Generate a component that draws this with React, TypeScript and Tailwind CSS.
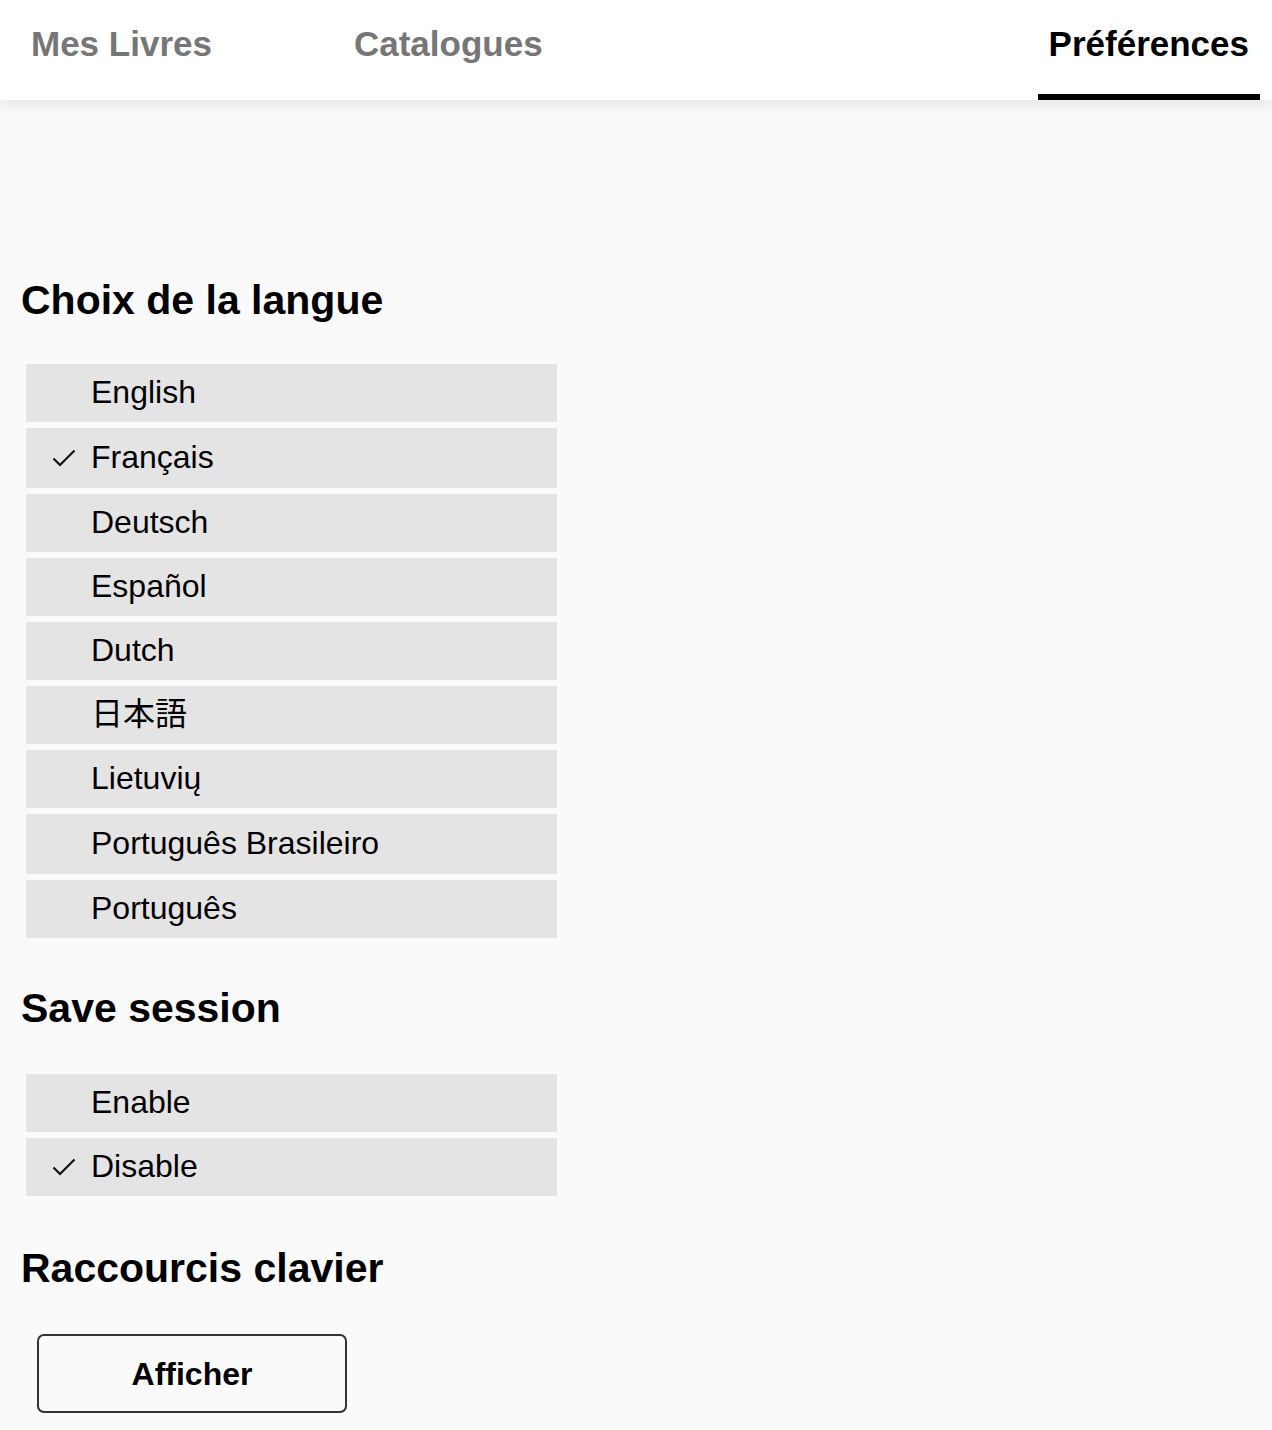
import React from 'react';

const sans = 'font-["Liberation_Sans","Noto_Sans_CJK_JP",Arial,sans-serif]';

const languages = [
  { label: 'English', checked: false, tall: false },
  { label: 'Français', checked: true, tall: true },
  { label: 'Deutsch', checked: false, tall: false },
  { label: 'Español', checked: false, tall: false },
  { label: 'Dutch', checked: false, tall: false },
  { label: '日本語', checked: false, tall: false },
  { label: 'Lietuvių', checked: false, tall: false },
  { label: 'Português Brasileiro', checked: false, tall: true },
  { label: 'Português', checked: false, tall: false },
];

const session = [
  { label: 'Enable', checked: false, tall: false },
  { label: 'Disable', checked: true, tall: false },
];

function Check() {
  return (
    <svg className="absolute left-[26px] top-1/2 -translate-y-1/2" width="24" height="18" viewBox="0 0 24 18" fill="none">
      <path d="M1.5 9.5 L8 16 L22.5 1.5" stroke="#111" strokeWidth="2.2" strokeLinecap="butt" strokeLinejoin="miter" />
    </svg>
  );
}

function OptionList({ items }: { items: { label: string; checked: boolean; tall: boolean }[] }) {
  return (
    <ul className="ml-[5px] flex w-[531px] flex-col gap-[6px]">
      {items.map((item) => (
        <li
          key={item.label}
          className={`relative flex items-center bg-[#e4e4e4] pb-[3px] pl-[65px] text-[32px] text-black ${item.tall ? 'h-[60px]' : 'h-[58px]'}`}
        >
          {item.checked && <Check />}
          {item.label}
        </li>
      ))}
    </ul>
  );
}

function Heading({ children, className = '' }: { children: React.ReactNode; className?: string }) {
  return <h2 className={`text-[41px] font-bold leading-[46px] text-black ${className}`}>{children}</h2>;
}

export default function App() {
  return (
    <div className={`${sans} min-h-[1430px] bg-[#fafafa]`}>
      <header className="relative z-10 flex h-[100px] bg-white shadow-[0_4px_14px_rgba(0,0,0,0.09)]">
        <div className="ml-[20px] flex h-full flex-col px-[11px]">
          <span className="pt-[24px] text-[35px] font-bold leading-[40px] text-[#767676]">Mes Livres</span>
        </div>
        <div className="ml-[120px] flex h-full flex-col px-[11px]">
          <span className="pt-[24px] text-[35px] font-bold leading-[40px] text-[#767676]">Catalogues</span>
        </div>
        <div className="ml-auto mr-[12px] flex h-full flex-col justify-between border-b-[6px] border-black px-[11px]">
          <span className="pt-[24px] text-[35px] font-bold leading-[40px] text-black">Préférences</span>
        </div>
      </header>

      <main className="pl-[21px] pt-[177px] pb-[17px]">
        <Heading className="mb-[41px]">Choix de la langue</Heading>
        <OptionList items={languages} />

        <Heading className="mt-[47px] mb-[43px]">Save session</Heading>
        <OptionList items={session} />

        <Heading className="mt-[49px] mb-[43px]">Raccourcis clavier</Heading>
        <button className="ml-[16px] flex h-[79px] w-[310px] items-center justify-center rounded-[7px] border-2 border-[#333] bg-transparent text-[32px] font-bold text-black">
          Afficher
        </button>
      </main>
    </div>
  );
}
